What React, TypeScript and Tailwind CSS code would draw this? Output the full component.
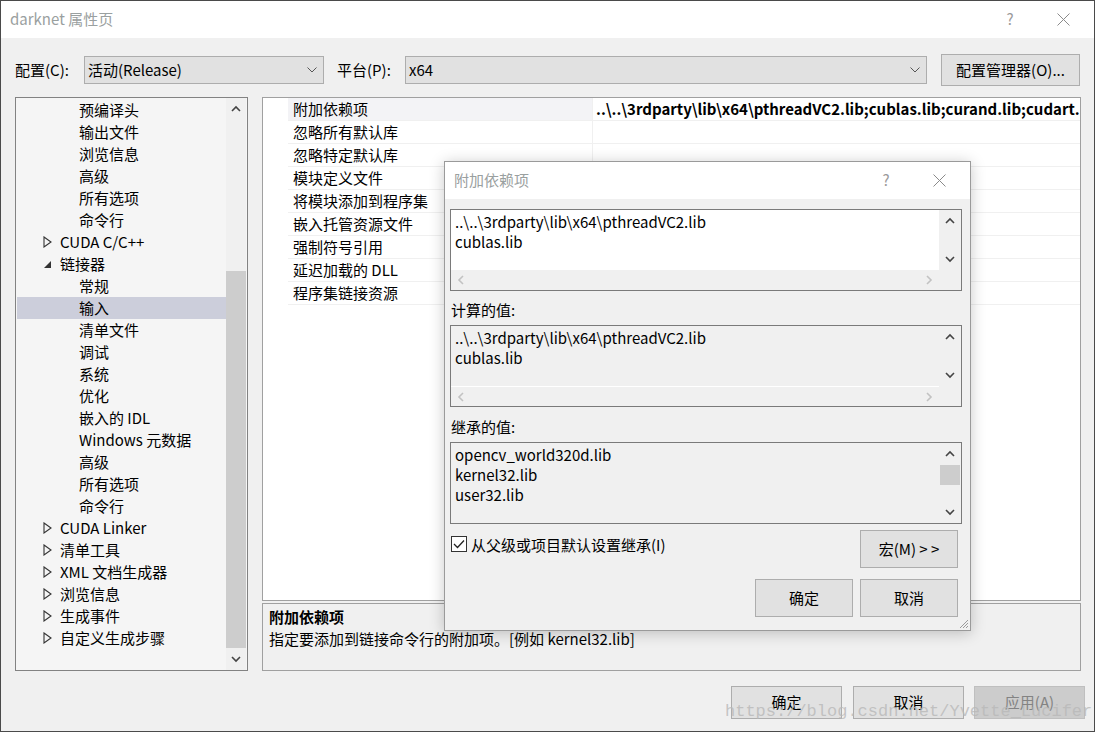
import React from 'react';

const treeItems: { label: string; level: number; arrow?: 'closed' | 'open'; selected?: boolean }[] = [
  { label: '预编译头', level: 2 },
  { label: '输出文件', level: 2 },
  { label: '浏览信息', level: 2 },
  { label: '高级', level: 2 },
  { label: '所有选项', level: 2 },
  { label: '命令行', level: 2 },
  { label: 'CUDA C/C++', level: 1, arrow: 'closed' },
  { label: '链接器', level: 1, arrow: 'open' },
  { label: '常规', level: 2 },
  { label: '输入', level: 2, selected: true },
  { label: '清单文件', level: 2 },
  { label: '调试', level: 2 },
  { label: '系统', level: 2 },
  { label: '优化', level: 2 },
  { label: '嵌入的 IDL', level: 2 },
  { label: 'Windows 元数据', level: 2 },
  { label: '高级', level: 2 },
  { label: '所有选项', level: 2 },
  { label: '命令行', level: 2 },
  { label: 'CUDA Linker', level: 1, arrow: 'closed' },
  { label: '清单工具', level: 1, arrow: 'closed' },
  { label: 'XML 文档生成器', level: 1, arrow: 'closed' },
  { label: '浏览信息', level: 1, arrow: 'closed' },
  { label: '生成事件', level: 1, arrow: 'closed' },
  { label: '自定义生成步骤', level: 1, arrow: 'closed' },
];

const props = [
  '附加依赖项',
  '忽略所有默认库',
  '忽略特定默认库',
  '模块定义文件',
  '将模块添加到程序集',
  '嵌入托管资源文件',
  '强制符号引用',
  '延迟加载的 DLL',
  '程序集链接资源',
];

const Chevron = ({ dir, color = '#606060' }: { dir: 'up' | 'down' | 'left' | 'right'; color?: string }) => {
  const d = {
    up: 'M1 6 L5 2 L9 6',
    down: 'M1 2 L5 6 L9 2',
    left: 'M6 1 L2 5 L6 9',
    right: 'M2 1 L6 5 L2 9',
  }[dir];
  const vertical = dir === 'up' || dir === 'down';
  return (
    <svg width={vertical ? 10 : 8} height={vertical ? 8 : 10} viewBox={vertical ? '0 0 10 8' : '0 0 8 10'}>
      <path d={d} fill="none" stroke={color} strokeWidth="1.6" />
    </svg>
  );
};

const ComboChevron = () => (
  <svg width="10" height="6" viewBox="0 0 10 6">
    <path d="M0.5 0.5 L5 5 L9.5 0.5" fill="none" stroke="#555" strokeWidth="1" />
  </svg>
);

const CloseX = () => (
  <svg width="13" height="13" viewBox="0 0 13 13">
    <path d="M0.5 0.5 L12.5 12.5 M12.5 0.5 L0.5 12.5" stroke="#8a8a8a" strokeWidth="1" />
  </svg>
);

const WinButton = ({ children, className = '' }: { children: React.ReactNode; className?: string }) => (
  <div className={`flex items-center justify-center bg-[#e1e1e1] border border-[#adadad] text-black ${className}`}>
    {children}
  </div>
);

// text box inside the dialog
const ListBox = ({
  lines,
  white,
  hscroll,
  thumb,
}: {
  lines: string[];
  white?: boolean;
  hscroll?: boolean;
  thumb?: boolean;
}) => (
  <div className="w-[512px] h-[82px] border border-[#7a7a7a] flex flex-col bg-[#f0f0f0]">
    <div className="flex flex-1 min-h-0">
      <div className={`flex-1 pl-[4px] pt-[2px] leading-[20px] ${white ? 'bg-white' : ''}`}>
        {lines.map((l, i) => (
          <div key={i}>{l}</div>
        ))}
      </div>
      <div className="w-[22px] flex flex-col items-center bg-[#f0f0f0]">
        <div className="h-[22px] flex items-center justify-center">
          <Chevron dir="up" color="#444" />
        </div>
        <div className="flex-1 w-full px-[1px]">
          {thumb && <div className="h-[20px] bg-[#cdcdcd]" />}
        </div>
        <div className="h-[22px] flex items-center justify-center">
          <Chevron dir="down" color="#444" />
        </div>
      </div>
    </div>
    {hscroll && (
      <div className="h-[20px] flex items-center">
        <div className={`flex-1 h-full flex items-center justify-between px-[6px] ${white ? '' : 'border-t border-white'}`}>
          <Chevron dir="left" color="#c2c2c2" />
          <Chevron dir="right" color="#c2c2c2" />
        </div>
        <div className="w-[22px]" />
      </div>
    )}
  </div>
);

const TriangleRight = () => (
  <svg width="9" height="12" viewBox="0 0 9 12">
    <path d="M1 1 L8 6 L1 11 Z" fill="none" stroke="#333" strokeWidth="1.1" />
  </svg>
);

const TriangleOpen = () => (
  <svg width="9" height="9" viewBox="0 0 9 9">
    <path d="M8 1 L8 8 L1 8 Z" fill="#333" />
  </svg>
);

export default function App() {
  return (
    <div className="relative w-[1095px] h-[732px] overflow-hidden border border-[#4a4a4a] bg-[#f0f0f0] flex flex-col text-[15px] text-black font-['Noto_Sans_CJK_SC','Noto_Sans',sans-serif]">
      {/* title bar */}
      <div className="h-[37px] bg-white flex items-center shrink-0">
        <div className="pl-[9px] text-[#9aa0a0] flex-1">darknet 属性页</div>
        <div className="w-[20px] text-center text-[#9a9a9a] mr-[37px]">?</div>
        <div className="mr-[24px] flex items-center">
          <CloseX />
        </div>
      </div>

      <div className="flex flex-col pl-[14px] pt-[16px] flex-1">
        {/* config row */}
        <div className="flex items-center h-[32px]">
          <div className="w-[69px]">配置(C):</div>
          <div className="w-[240px] h-[28px] bg-[#e1e1e1] border border-[#adadad] flex items-center pl-[3px] pr-[6px]">
            <span className="flex-1">活动(Release)</span>
            <ComboChevron />
          </div>
          <div className="w-[68px] ml-[13px]">平台(P):</div>
          <div className="w-[522px] h-[28px] bg-[#e1e1e1] border border-[#adadad] flex items-center pl-[3px] pr-[6px]">
            <span className="flex-1">x64</span>
            <ComboChevron />
          </div>
          <WinButton className="w-[139px] h-[32px] ml-[14px]">配置管理器(O)...</WinButton>
        </div>

        {/* main */}
        <div className="flex mt-[11px] h-[574px]">
          {/* tree */}
          <div className="w-[233px] h-full border border-[#828282] bg-[#f5f5f5] flex">
            <div className="flex-1 pt-[1px] pl-[1px]">
              {treeItems.map((it, i) => (
                <div
                  key={i}
                  className={`h-[22px] flex items-center whitespace-nowrap ${it.selected ? 'bg-[#cccedb]' : ''}`}
                >
                  {it.level === 2 ? (
                    <span className="pl-[62px]">{it.label}</span>
                  ) : (
                    <>
                      <span className="w-[37px] flex justify-end pr-[2px]">
                        {it.arrow === 'open' ? <TriangleOpen /> : <TriangleRight />}
                      </span>
                      <span className="pl-[6px]">{it.label}</span>
                    </>
                  )}
                </div>
              ))}
            </div>
            <div className="w-[20px] mr-[1px] bg-[#f0f0f0] flex flex-col">
              <div className="h-[22px] flex items-center justify-center">
                <Chevron dir="up" color="#444" />
              </div>
              <div className="flex-1">
                <div className="h-[151px]" />
                <div className="h-[377px] bg-[#cdcdcd]" />
              </div>
              <div className="h-[22px] flex items-center justify-center">
                <Chevron dir="down" color="#444" />
              </div>
            </div>
          </div>

          {/* property grid + description */}
          <div className="w-[819px] ml-[14px] flex flex-col">
            <div className="h-[504px] border border-[#a0a0a0] bg-white">
              {props.map((p, i) => (
                <div key={i} className="h-[23px] flex">
                  <div className="w-[25px]" />
                  <div
                    className={`w-[304px] pl-[5px] flex items-center border-b border-[#f0f0f0] ${i === 0 ? 'bg-[#f3f3f6]' : ''}`}
                  >
                    {p}
                  </div>
                  <div className="flex-1 min-w-0 pl-[3px] flex items-center border-b border-l border-[#f0f0f0] overflow-hidden whitespace-nowrap">
                    {i === 0 && (
                      <span className="font-bold">
                        ..\..\3rdparty\lib\x64\pthreadVC2.lib;cublas.lib;curand.lib;cudart.lib;%(AdditionalDependencies)
                      </span>
                    )}
                  </div>
                </div>
              ))}
            </div>
            <div className="h-[68px] mt-[2px] border border-[#a0a0a0] bg-[#f0f0f0] pl-[6px] pt-[2px] leading-[22px]">
              <div className="font-bold">附加依赖项</div>
              <div>指定要添加到链接命令行的附加项。[例如 kernel32.lib]</div>
            </div>
          </div>
        </div>

        {/* bottom buttons */}
        <div className="flex justify-end mt-[15px] pr-[9px]">
          <WinButton className="w-[111px] h-[33px]">确定</WinButton>
          <WinButton className="w-[111px] h-[33px] ml-[11px]">取消</WinButton>
          <div className="w-[111px] h-[33px] ml-[10px] flex items-center justify-center bg-[#cccccc] border border-[#bfbfbf] text-[#838383]">
            应用(A)
          </div>
        </div>
      </div>

      {/* watermark */}
      <div className="absolute left-[724px] top-[699px] text-[17px] leading-[24px] text-[#b8b8b8]/80 font-['Liberation_Mono',monospace] whitespace-nowrap pointer-events-none">
        https://blog.csdn.net/Yvette_Lucifer
      </div>

      {/* additional dependencies dialog */}
      <div className="absolute left-[443px] top-[160px] w-[527px] h-[470px] border border-[#9a9a9a] bg-[#f0f0f0] shadow-[0_2px_14px_rgba(0,0,0,0.22)] flex flex-col">
        <div className="h-[37px] bg-white flex items-center shrink-0">
          <div className="pl-[9px] flex-1 text-[#9aa0a0]">附加依赖项</div>
          <div className="w-[20px] text-center text-[#9a9a9a] mr-[37px]">?</div>
          <div className="mr-[24px] flex items-center">
            <CloseX />
          </div>
        </div>
        <div className="flex flex-col pl-[5px] pt-[10px] flex-1">
          <ListBox lines={['..\\..\\3rdparty\\lib\\x64\\pthreadVC2.lib', 'cublas.lib']} white hscroll />
          <div className="mt-[9px] h-[20px] leading-[20px] pl-[1px]">计算的值:</div>
          <div className="mt-[5px]">
            <ListBox lines={['..\\..\\3rdparty\\lib\\x64\\pthreadVC2.lib', 'cublas.lib']} hscroll />
          </div>
          <div className="mt-[10px] h-[20px] leading-[20px] pl-[1px]">继承的值:</div>
          <div className="mt-[5px]">
            <ListBox lines={['opencv_world320d.lib', 'kernel32.lib', 'user32.lib']} thumb />
          </div>

          <div className="flex mt-[6px] pr-[12px]">
            <div className="flex-1 flex items-start pt-[6px]">
              <div className="w-[16px] h-[16px] ml-[1px] border border-[#333] bg-white flex items-center justify-center">
                <svg width="12" height="10" viewBox="0 0 12 10">
                  <path d="M1 5 L4.5 8.5 L11 1.5" fill="none" stroke="#222" strokeWidth="1.3" />
                </svg>
              </div>
              <span className="ml-[4px] leading-[18px]">从父级或项目默认设置继承(I)</span>
            </div>
            <WinButton className="w-[98px] h-[38px]">宏(M) &gt; &gt;</WinButton>
          </div>

          <div className="flex justify-end mt-[11px] pr-[12px]">
            <WinButton className="w-[98px] h-[38px]">确定</WinButton>
            <WinButton className="w-[98px] h-[38px] ml-[7px]">取消</WinButton>
          </div>
        </div>
        <svg className="absolute right-[1px] bottom-[1px]" width="11" height="11" viewBox="0 0 11 11">
          <path d="M10 2 L2 10 M10 5 L5 10 M10 8 L8 10" stroke="#9a9a9a" strokeWidth="1" />
        </svg>
      </div>
    </div>
  );
}
